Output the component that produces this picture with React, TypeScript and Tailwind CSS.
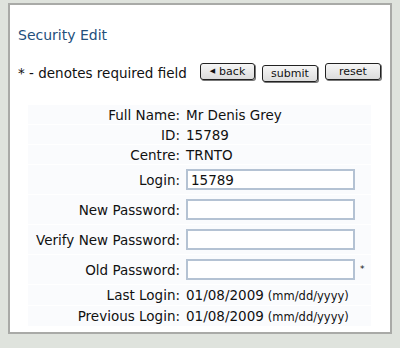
import React from 'react'

const font = { fontFamily: '"DejaVu Sans", Verdana, sans-serif' }

type Row = {
  label: string
  value?: string
  input?: string | boolean
  required?: boolean
  date?: boolean
  h: string
}

const rows: Row[] = [
  { label: 'Full Name:', value: 'Mr Denis Grey', h: 'h-[20px]' },
  { label: 'ID:', value: '15789', h: 'h-[20px]' },
  { label: 'Centre:', value: 'TRNTO', h: 'h-[20px]' },
  { label: 'Login:', input: '15789', h: 'h-[30px]' },
  { label: 'New Password:', input: true, h: 'h-[30px]' },
  { label: 'Verify New Password:', input: true, h: 'h-[30px]' },
  { label: 'Old Password:', input: true, required: true, h: 'h-[30px]' },
  { label: 'Last Login:', value: '01/08/2009', date: true, h: 'h-[21px]' },
  { label: 'Previous Login:', value: '01/08/2009', date: true, h: 'h-[21px]' }
]

function MacButton({ children, className }: { children: React.ReactNode; className?: string }) {
  return (
    <button
      type="button"
      className={`flex h-[17px] items-center justify-center rounded-[3px] border border-[#222] bg-gradient-to-b from-[#f6f6f6] to-[#dcdcdc] text-[11px] leading-none text-[#111] shadow-[1px_1px_0_#777] ${className ?? ''}`}
      style={{ fontFamily: '"DejaVu Sans", sans-serif' }}
    >
      {children}
    </button>
  )
}

export default function App() {
  return (
    <div className="h-[348px] w-[400px] bg-[#dfe3dd] pl-[8px] pt-[3px]" style={font}>
      <div className="h-[331px] w-[384px] border-2 border-[#a9aaa7] bg-white">
        <h1 className="pl-[8px] pt-[21px] text-[14px] leading-[18px] text-[#234f7c]">
          Security Edit
        </h1>
        <div className="mt-[19px] flex items-center pl-[8px] text-[13.5px] text-[#111]">
          <span className="w-[182px] whitespace-nowrap">* - denotes required field</span>
          <MacButton className="mt-[-3px] w-[55px] gap-[4px]">
            <span className="text-[7px]">◀</span>back
          </MacButton>
          <MacButton className="ml-[7px] mt-[1px] w-[56px]">submit</MacButton>
          <MacButton className="ml-[7px] mt-[-4px] w-[56px]">reset</MacButton>
        </div>
        <div className="ml-[18px] mt-[22px] w-[343px] bg-[#fafbfd] text-[13.5px] text-[#111]">
          {rows.map((r) => (
            <div key={r.label} className={`flex items-center border-b border-white ${r.h}`}>
              <div className="w-[152px] shrink-0 whitespace-nowrap text-right">{r.label}</div>
              <div className="flex items-center pl-[6px]">
                {r.input !== undefined ? (
                  <>
                    <div className="flex h-[21px] w-[169px] items-center border-2 border-[#b4c2d3] bg-white pl-[3px]">
                      {typeof r.input === 'string' ? r.input : ''}
                    </div>
                    {r.required ? <span className="ml-[5px] text-[9px]">*</span> : null}
                  </>
                ) : (
                  <span className="whitespace-nowrap">
                    {r.value}
                    {r.date ? <span className="ml-[4px] text-[11.5px]">(mm/dd/yyyy)</span> : null}
                  </span>
                )}
              </div>
            </div>
          ))}
        </div>
      </div>
    </div>
  )
}
